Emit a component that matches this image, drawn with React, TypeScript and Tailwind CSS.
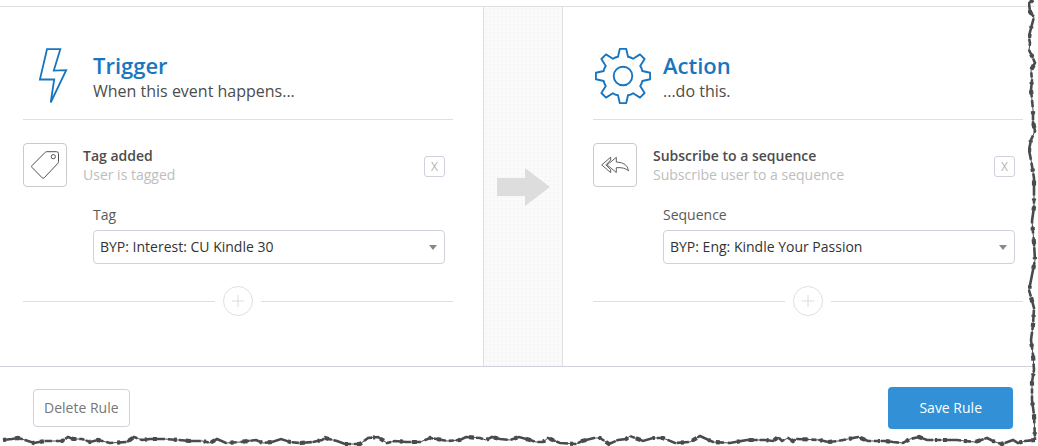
import { useId, useState } from "react";
import type { ReactNode } from "react";

const RIGHT_EDGE =
  "5,0 1,3 2,12 6,17 2,32 1,38 2,43 1,50 4,56 7,63 3,70 4,80 3,90 5,110 5,122 7,131 3,140 1,150 3,160 6,178 6,190 6,207 4,221 6,243 7,260 4,275 1,290 6,308 5,325 3,340 5,355 6,370 4,382 4,400 6,415 7,440";

const BOTTOM_EDGE =
  "3,6 12,5 18,4 25,6 34,9 45,7 62,7 68,3 73,5 82,5 90,8 98,6 110,9 127,8 134,3 142,6 150,5 165,5 178,6 190,7 203,7 210,9 217,5 226,9 240,8 256,6 263,9 272,8 281,5 290,8 300,9 313,8 322,6 325,4 337,7 345,10 360,10 368,4 378,3 387,9 395,7 406,8 420,8 430,4 437,5 447,7 460,6 466,3 480,4 486,6 492,3 500,5 510,6 519,3 530,6 536,8 543,8 548,4 560,9 576,10 582,7 594,4 600,4 609,10 618,6 626,5 630,2 643,7 653,4 663,4 675,9 690,8 700,2 713,8 730,9 747,6 765,6 773,7 778,3 782,7 788,4 793,7 797,5 820,6 828,8 838,7 848,5 858,3 868,7 885,7 893,8 903,9 910,5 919,3 927,6 957,6 965,7 975,8 987,4 995,8 1002,10 1013,6 1018,9 1025,7 1035,6";

function BoltIcon() {
  return (
    <svg width="30" height="56" viewBox="0 0 30 56" fill="none" stroke="#1876c0" strokeWidth="1.8" aria-hidden="true">
      <path d="M9 1.2H22.3L15.8 22.6L28.2 22.2L12.7 54.5L16.2 31.5H1.9Z" />
    </svg>
  );
}

function GearIcon() {
  return (
    <svg width="56" height="56" viewBox="-28 -28 56 56" fill="none" stroke="#1876c0" strokeWidth="1.9" strokeLinejoin="round" aria-hidden="true">
      <path d="M-3.2 -27.1H3.2L5 -19.3Q7.8 -18.8 10.1 -17.2L17 -21.6L21.6 -17L17.2 -10.1Q18.8 -7.8 19.3 -5L27.1 -3.2V3.2L19.3 5Q18.8 7.8 17.2 10.1L21.6 17L17 21.6L10.1 17.2Q7.8 18.8 5 19.3L3.2 27.1H-3.2L-5 19.3Q-7.8 18.8 -10.1 17.2L-17 21.6L-21.6 17L-17.2 10.1Q-18.8 7.8 -19.3 5L-27.1 3.2V-3.2L-19.3 -5Q-18.8 -7.8 -17.2 -10.1L-21.6 -17L-17 -21.6L-10.1 -17.2Q-7.8 -18.8 -5 -19.3Z" />
      <circle r="9.3" />
    </svg>
  );
}

function TagIcon() {
  return (
    <svg width="28" height="28" viewBox="0 0 28 28" fill="none" stroke="#505050" aria-hidden="true">
      <path d="M15.6 0.7H25.4Q27.5 0.7 27.5 2.6V10.6Q27.5 11.6 26.8 12.4L13.2 26.8Q12.2 27.8 11.2 26.8L1.1 16.5Q0.1 15.5 1.1 14.5L14.2 1.3Q14.8 0.7 15.6 0.7Z" />
      <circle cx="22.3" cy="5.7" r="2.1" />
    </svg>
  );
}

function ReplyAllIcon() {
  return (
    <svg width="28" height="18" viewBox="0 0 28 18" fill="none" stroke="#505050" strokeWidth="0.9" aria-hidden="true">
      <path d="M9.7 1.2L0.7 8.9L9.7 16.6V13.8L4.9 8.9L9.7 4Z" />
      <path d="M15.3 1.3L6.1 8.9L15.3 16.5V11.7Q23.2 11 27.5 14.8Q26.6 6.4 15.3 6Z" />
    </svg>
  );
}

interface PanelProps {
  title: string;
  subtitle: string;
  icon: ReactNode;
  itemIcon: ReactNode;
  itemTitle: string;
  itemText: string;
  fieldLabel: string;
  options: string[];
}

function RulePanel({ title, subtitle, icon, itemIcon, itemTitle, itemText, fieldLabel, options }: PanelProps) {
  const id = useId();
  const [value, setValue] = useState(options[0]);

  return (
    <section className="min-w-0 flex-1 pt-10 pb-[50px]">
      <header className="flex gap-[10px] border-b border-[#dedfe1] pb-[15px]">
        <div className="flex w-[60px] shrink-0 justify-center pt-px">{icon}</div>
        <div className="pt-1">
          <h2 className="text-[22px] leading-7 font-semibold text-[#1876c0]">{title}</h2>
          <p className="text-base leading-6 text-[#4c4c4c]">{subtitle}</p>
        </div>
      </header>

      <div className="mt-[23px] flex items-center pr-2">
        <div className="flex size-11 shrink-0 items-center justify-center rounded border border-[#c9cacc]">{itemIcon}</div>
        <div className="ml-4 flex-1 text-sm leading-[19px]">
          <h3 className="font-semibold text-[#4c4c4c]">{itemTitle}</h3>
          <p className="text-[#bcbec0]">{itemText}</p>
        </div>
        <button
          type="button"
          aria-label={`Remove ${itemTitle}`}
          className="mt-[3px] flex size-[21px] items-center justify-center rounded-[3px] border border-[#d0d1da] text-xs text-[#b4b4b8]"
        >
          X
        </button>
      </div>

      <div className="mt-[18px] pr-2 pl-[70px]">
        <label htmlFor={id} className="block text-sm leading-5 text-[#5a5a5a]">
          {fieldLabel}
        </label>
        <div className="relative mt-[5px]">
          <select
            id={id}
            value={value}
            onChange={e => setValue(e.target.value)}
            className="block h-[34px] w-full appearance-none rounded border border-[#d0d1da] bg-white pr-6 pl-[6px] text-sm text-[#333333]"
          >
            {options.map(option => (
              <option key={option}>{option}</option>
            ))}
          </select>
          <svg width="8" height="5" viewBox="0 0 8 5" className="pointer-events-none absolute top-[15px] right-2" aria-hidden="true">
            <path d="M0 0H8L4 5Z" fill="#888888" />
          </svg>
        </div>
      </div>

      <div className="mt-[22px] flex items-center gap-2">
        <span className="h-px flex-1 bg-[#dedfe1]" />
        <button type="button" aria-label={`Add ${title}`} className="flex size-[30px] items-center justify-center rounded-full border border-[#dedfe1]">
          <svg width="12" height="12" viewBox="0 0 12 12" stroke="#dcdcdc" aria-hidden="true">
            <path d="M6 0V12M0 6H12" />
          </svg>
        </button>
        <span className="h-px flex-1 bg-[#dedfe1]" />
      </div>
    </section>
  );
}

// Ragged paper edge: a hairline with uneven heavier strokes on top
function TornLine({ points }: { points: string }) {
  return (
    <g fill="none" stroke="#4a4a4a">
      <polyline points={points} strokeWidth="1" />
      <polyline points={points} strokeWidth="2.6" strokeDasharray="12 3 5 2 18 3 7 4 9 1" />
      <polyline points={points} strokeWidth="4.2" strokeDasharray="3 9 5 13 2 6 4 17" />
    </g>
  );
}

export default function App() {
  return (
    <div className="relative min-h-screen overflow-hidden bg-white pt-[6px] font-['Open_Sans',sans-serif]">
      <main className="mr-1 border-y border-t-[#dedfe1] border-b-[#d0d1da]">
        <div className="flex pr-[11px] pl-[23px]">
          <RulePanel
            title="Trigger"
            subtitle="When this event happens..."
            icon={<BoltIcon />}
            itemIcon={<TagIcon />}
            itemTitle="Tag added"
            itemText="User is tagged"
            fieldLabel="Tag"
            options={["BYP: Interest: CU Kindle 30"]}
          />
          <div className="mx-[30px] flex w-20 shrink-0 justify-center border-x border-[#dedfe1] bg-[#fafafa] bg-[radial-gradient(#f6f6f6_1px,transparent_1px)] bg-size-[4px_4px] pt-[161px]">
            <svg width="53" height="38" viewBox="0 0 53 38" aria-hidden="true">
              <path d="M0 10H28V0L53 19L28 38V28H0Z" fill="#dddddd" />
            </svg>
          </div>
          <RulePanel
            title="Action"
            subtitle="...do this."
            icon={<GearIcon />}
            itemIcon={<ReplyAllIcon />}
            itemTitle="Subscribe to a sequence"
            itemText="Subscribe user to a sequence"
            fieldLabel="Sequence"
            options={["BYP: Eng: Kindle Your Passion"]}
          />
        </div>
      </main>

      <footer className="flex items-center justify-between pt-5 pr-[25px] pb-4 pl-[33px] text-sm">
        <button type="button" className="h-[38px] rounded border border-[#d0d1da] px-[10px] text-[#777777]">
          Delete Rule
        </button>
        <button type="button" className="h-[42px] rounded bg-[#3190d6] px-[31px] text-white">
          Save Rule
        </button>
      </footer>

      <svg viewBox="0 0 10 446" preserveAspectRatio="none" className="pointer-events-none absolute top-0 right-0 h-full w-[10px]" aria-hidden="true">
        <TornLine points={RIGHT_EDGE} />
      </svg>
      <svg viewBox="0 0 1038 12" preserveAspectRatio="none" className="pointer-events-none absolute bottom-0 left-0 h-3 w-full" aria-hidden="true">
        <TornLine points={BOTTOM_EDGE} />
      </svg>
    </div>
  );
}
